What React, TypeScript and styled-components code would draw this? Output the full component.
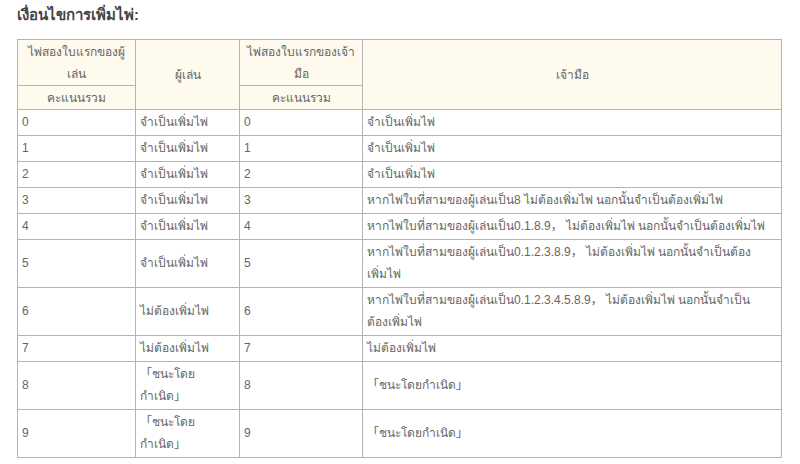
import { ReactNode } from "react";
import styled, { createGlobalStyle } from "styled-components";

const GlobalStyle = createGlobalStyle`
    html, body {
        margin: 0;
        padding: 0;
        background: #ffffff;
    }
    body {
        font-family: "Liberation Sans", "Noto Sans", "Noto Sans CJK SC", sans-serif;
        color: #555555;
    }
`;

const Page = styled.div`
    padding: 6px 18px 0 17px;
`;

const Title = styled.h3`
    margin: 0 0 15px;
    font-size: 15px;
    line-height: 18px;
    font-weight: bold;
    color: #444444;
`;

const Table = styled.table`
    width: 765px;
    border-collapse: collapse;
    table-layout: fixed;
    font-size: 12px;
    line-height: 22px;
`;

const HeadCell = styled.th`
    background: #fefaee;
    border: 1px solid #b4b4b4;
    padding: 1px 4px 0;
    font-weight: normal;
    text-align: center;
    vertical-align: middle;
    color: #666666;
`;

const Cell = styled.td`
    border: 1px solid #b4b4b4;
    padding: 1px 4px 2px;
    text-align: left;
    vertical-align: middle;
    color: #666666;
`;

type Row = { player: string; playerAction: ReactNode; dealer: string; dealerAction: ReactNode };

const need = "จำเป็นเพิ่มไพ่";
const noNeed = "ไม่ต้องเพิ่มไพ่";
const natural = "「ชนะโดยกำเนิด」";

const rows: Row[] = [
    { player: "0", playerAction: need, dealer: "0", dealerAction: need },
    { player: "1", playerAction: need, dealer: "1", dealerAction: need },
    { player: "2", playerAction: need, dealer: "2", dealerAction: need },
    { player: "3", playerAction: need, dealer: "3", dealerAction: "หากไพ่ใบที่สามของผู้เล่นเป็น8 ไม่ต้องเพิ่มไพ่ นอกนั้นจำเป็นต้องเพิ่มไพ่" },
    { player: "4", playerAction: need, dealer: "4", dealerAction: "หากไพ่ใบที่สามของผู้เล่นเป็น0.1.8.9，  ไม่ต้องเพิ่มไพ่ นอกนั้นจำเป็นต้องเพิ่มไพ่" },
    {
        player: "5",
        playerAction: need,
        dealer: "5",
        dealerAction: (
            <>
                หากไพ่ใบที่สามของผู้เล่นเป็น0.1.2.3.8.9，  ไม่ต้องเพิ่มไพ่ นอกนั้นจำเป็นต้อง
                <br />
                เพิ่มไพ่
            </>
        ),
    },
    {
        player: "6",
        playerAction: noNeed,
        dealer: "6",
        dealerAction: (
            <>
                หากไพ่ใบที่สามของผู้เล่นเป็น0.1.2.3.4.5.8.9，  ไม่ต้องเพิ่มไพ่ นอกนั้นจำเป็น
                <br />
                ต้องเพิ่มไพ่
            </>
        ),
    },
    { player: "7", playerAction: noNeed, dealer: "7", dealerAction: noNeed },
    { player: "8", playerAction: natural, dealer: "8", dealerAction: natural },
    { player: "9", playerAction: natural, dealer: "9", dealerAction: natural },
];

export default function App() {
    return (
        <>
            <GlobalStyle />
            <Page>
                <Title>เงื่อนไขการเพิ่มไพ่:</Title>
                <Table>
                    <colgroup>
                        <col style={{ width: 118 }} />
                        <col style={{ width: 104 }} />
                        <col style={{ width: 123 }} />
                        <col />
                    </colgroup>
                    <thead>
                        <tr>
                            <HeadCell>ไพ่สองใบแรกของผู้เล่น</HeadCell>
                            <HeadCell rowSpan={2}>ผู้เล่น</HeadCell>
                            <HeadCell>ไพ่สองใบแรกของเจ้ามือ</HeadCell>
                            <HeadCell rowSpan={2}>เจ้ามือ</HeadCell>
                        </tr>
                        <tr>
                            <HeadCell>คะแนนรวม</HeadCell>
                            <HeadCell>คะแนนรวม</HeadCell>
                        </tr>
                    </thead>
                    <tbody>
                        {rows.map((r) => (
                            <tr key={r.player}>
                                <Cell>{r.player}</Cell>
                                <Cell>{r.playerAction}</Cell>
                                <Cell>{r.dealer}</Cell>
                                <Cell>{r.dealerAction}</Cell>
                            </tr>
                        ))}
                    </tbody>
                </Table>
            </Page>
        </>
    );
}
